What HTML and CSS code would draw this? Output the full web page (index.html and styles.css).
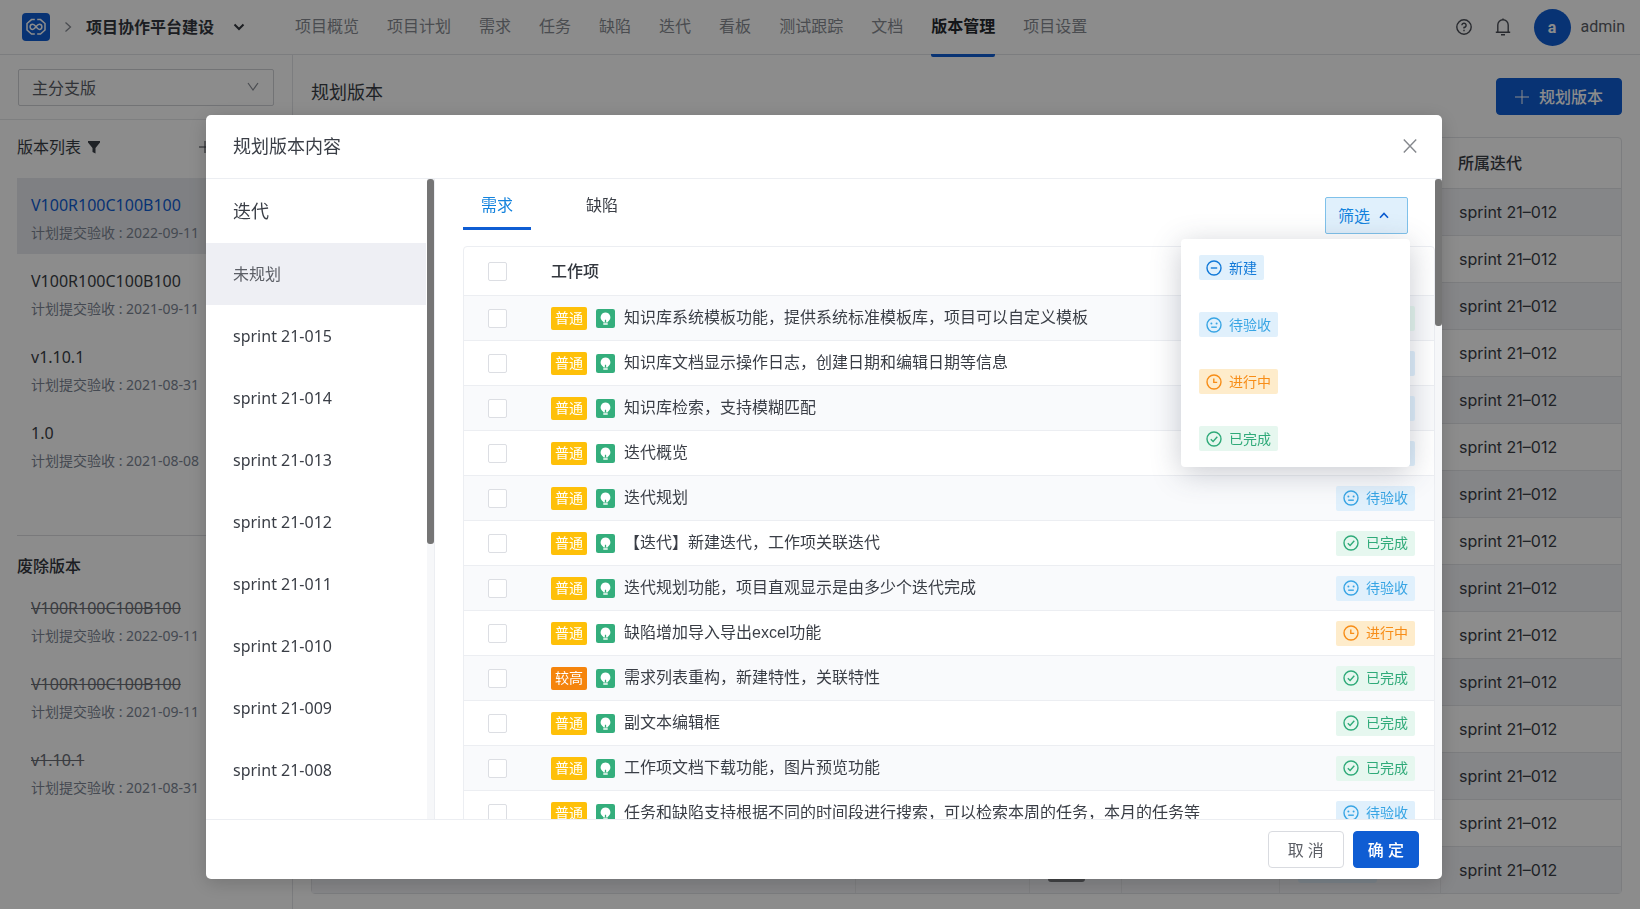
FILE: index.html
```html
<!DOCTYPE html>
<html lang="zh-CN">
<head>
<meta charset="utf-8">
<meta name="viewport" content="width=device-width, initial-scale=1">
<title>版本管理</title>
<link rel="stylesheet" href="styles.css">
</head>
<body>
<svg class="sprite" aria-hidden="true">
  <symbol id="i-bulb" viewBox="0 0 18 18">
    <rect width="18" height="18" rx="2" fill="#34ae7c"/>
    <path d="M9 3.200a4.600 4.600 0 0 0-3.200 7.900c.8.700 1.200 1.100 1.300 1.600h3.800c.1-.5.500-.9 1.300-1.600A4.600 4.600 0 0 0 9 3.200z" fill="#fff"/>
    <path d="M9 12.800v-2.600" stroke="#34ae7c" stroke-width="1.200"/>
    <path d="M6.900 14.200h4.200" stroke="#fff" stroke-width="1.400"/>
  </symbol>
  <symbol id="i-new" viewBox="0 0 16 16"><g fill="none" stroke="currentColor" stroke-width="1.4"><circle cx="8" cy="8" r="7"/><path d="M4.8 8h6.4"/></g></symbol>
  <symbol id="i-face" viewBox="0 0 16 16"><g fill="none" stroke="currentColor" stroke-width="1.4"><circle cx="8" cy="8" r="7"/><path d="M5.2 10.2h5.6"/></g><circle cx="5.4" cy="6.4" r="1" fill="currentColor"/><circle cx="10.6" cy="6.4" r="1" fill="currentColor"/></symbol>
  <symbol id="i-clock" viewBox="0 0 16 16"><g fill="none" stroke="currentColor" stroke-width="1.4"><circle cx="8" cy="8" r="7"/><path d="M7.8 4.4v4h3.4"/></g></symbol>
  <symbol id="i-done" viewBox="0 0 16 16"><g fill="none" stroke="currentColor" stroke-width="1.4"><circle cx="8" cy="8" r="7"/><path d="M4.8 8.2l2.3 2.2 4.2-4.6"/></g></symbol>
</svg>

<div class="app">
  <header class="topbar">
    <a class="logo" href="#" aria-label="首页"><svg width="28" height="28" viewBox="0 0 28 28"><rect width="28" height="28" rx="4" fill="#0f5dd3"/><g fill="none" stroke="#fff" stroke-width="1.500"><path d="M12.800 6.600H9.500L5 10.500v6.500l4.500 4h3.300M15.200 6.600h3.300l4.500 3.900v6.500l-4.500 4h-3.300"/><path d="M14 13.800c-1.500-2-2.300-2.600-3.300-2.600a2.600 2.600 0 0 0 0 5.200c1 0 1.800-.6 3.300-2.600s2.300-2.600 3.300-2.600a2.600 2.600 0 0 1 0 5.200c-1 0-1.800-.6-3.300-2.600z"/></g></svg></a>
    <svg class="crumb" width="8" height="12" viewBox="0 0 8 12"><path d="M1.500 1.500L6.500 6l-5 4.500" fill="none" stroke="#888c94" stroke-width="1.300"/></svg>
    <button class="project" type="button">项目协作平台建设 <svg width="12" height="8" viewBox="0 0 12 8"><path d="M1.500 1.500L6 6l4.500-4.500" fill="none" stroke="currentColor" stroke-width="2"/></svg></button>
    <nav class="nav">
      <a href="#">项目概览</a><a href="#">项目计划</a><a href="#">需求</a><a href="#">任务</a><a href="#">缺陷</a><a href="#">迭代</a><a href="#">看板</a><a href="#">测试跟踪</a><a href="#">文档</a><a class="active" href="#">版本管理</a><a href="#">项目设置</a>
    </nav>
    <div class="user">
      <button class="icon-btn" type="button" aria-label="帮助"><svg width="16" height="16" viewBox="0 0 16 16" fill="none" stroke="currentColor" stroke-width="1.400"><circle cx="8" cy="8" r="7.200"/><path d="M5.900 6.300A2.100 2.100 0 1 1 8 8.400v1.200"/><path d="M8 10.800v1.400"/></svg></button>
      <button class="icon-btn" type="button" aria-label="通知"><svg width="16" height="18" viewBox="0 0 16 18" fill="none" stroke="currentColor" stroke-width="1.400"><path d="M.8 14.300h14.400M2.800 14.300V7a5.200 5.200 0 0 1 10.400 0v7.300M8 .4v1.600M6 16.800h4"/></svg></button>
      <span class="avatar">a</span>
      <span class="username">admin</span>
    </div>
  </header>

  <div class="page">
    <aside class="sidebar">
      <div class="branch">
        <div class="select-box">
          <select aria-label="分支"><option>主分支版</option></select>
          <svg width="12" height="10" viewBox="0 0 12 10"><path d="M1 1l5 7 5-7" fill="none" stroke="#888c94" stroke-width="1.200"/></svg>
        </div>
      </div>
      <section class="versions">
        <h2 class="side-title">版本列表
          <svg width="12" height="13" viewBox="0 0 12 13"><path d="M0 0h12v1.500L7.500 7v5.500l-3-1.500V7L0 1.500z" fill="currentColor"/></svg>
          <button class="add" type="button" aria-label="新增版本"><svg width="12" height="12" viewBox="0 0 12 12"><path d="M6 0v12M0 6h12" stroke="currentColor" stroke-width="1"/></svg></button>
        </h2>
        <ul class="version-list">
          <li class="selected"><strong>V100R100C100B100</strong><span>计划提交验收 : 2022-09-11</span></li>
          <li><strong>V100R100C100B100</strong><span>计划提交验收 : 2021-09-11</span></li>
          <li><strong>v1.10.1</strong><span>计划提交验收 : 2021-08-31</span></li>
          <li><strong>1.0</strong><span>计划提交验收 : 2021-08-08</span></li>
        </ul>
      </section>
      <section class="obsolete">
        <h2 class="side-title">废除版本</h2>
        <ul class="version-list struck">
          <li><strong>V100R100C100B100</strong><span>计划提交验收 : 2022-09-11</span></li>
          <li><strong>V100R100C100B100</strong><span>计划提交验收 : 2021-09-11</span></li>
          <li><strong>v1.10.1</strong><span>计划提交验收 : 2021-08-31</span></li>
        </ul>
      </section>
    </aside>

    <main class="main">
      <div class="main-head">
        <h1>规划版本</h1>
        <button class="btn primary plan" type="button"><svg width="14" height="14" viewBox="0 0 14 14"><path d="M7 0v14M0 7h14" stroke="currentColor" stroke-width="1"/></svg>规划版本</button>
      </div>
      <table class="plan-table">
        <colgroup><col><col class="c2"><col class="c3"><col class="c4"><col class="c5"><col class="c6"></colgroup>
        <thead><tr><th></th><th></th><th></th><th></th><th></th><th>所属迭代</th></tr></thead>
        <tbody>
          <tr><td></td><td></td><td></td><td></td><td></td><td>sprint 21–012</td></tr>
          <tr><td></td><td></td><td></td><td></td><td></td><td>sprint 21–012</td></tr>
          <tr><td></td><td></td><td></td><td></td><td></td><td>sprint 21–012</td></tr>
          <tr><td></td><td></td><td></td><td></td><td></td><td>sprint 21–012</td></tr>
          <tr><td></td><td></td><td></td><td></td><td></td><td>sprint 21–012</td></tr>
          <tr><td></td><td></td><td></td><td></td><td></td><td>sprint 21–012</td></tr>
          <tr><td></td><td></td><td></td><td></td><td></td><td>sprint 21–012</td></tr>
          <tr><td></td><td></td><td></td><td></td><td></td><td>sprint 21–012</td></tr>
          <tr><td></td><td></td><td></td><td></td><td></td><td>sprint 21–012</td></tr>
          <tr><td></td><td></td><td></td><td></td><td></td><td>sprint 21–012</td></tr>
          <tr><td></td><td></td><td></td><td></td><td></td><td>sprint 21–012</td></tr>
          <tr><td></td><td></td><td></td><td></td><td></td><td>sprint 21–012</td></tr>
          <tr><td></td><td></td><td></td><td></td><td></td><td>sprint 21–012</td></tr>
          <tr><td></td><td></td><td></td><td></td><td></td><td>sprint 21–012</td></tr>
          <tr><td></td><td></td><td><span class="chip dark"></span></td><td></td><td><span class="chip light"></span></td><td>sprint 21–012</td></tr>
        </tbody>
      </table>
    </main>
  </div>
</div>

<div class="mask">
  <div class="modal" role="dialog" aria-modal="true" aria-labelledby="dlg-title">
    <header class="modal-head">
      <h2 id="dlg-title">规划版本内容</h2>
      <button class="close" type="button" aria-label="关闭"><svg width="14" height="14" viewBox="0 0 14 14"><path d="M.8.5l12.400 13M13.200.5L.8 13.500" stroke="currentColor" stroke-width="1.400"/></svg></button>
    </header>

    <div class="modal-body">
      <div class="sprints">
        <h3>迭代</h3>
        <ul>
          <li class="selected">未规划</li>
          <li>sprint 21-015</li>
          <li>sprint 21-014</li>
          <li>sprint 21-013</li>
          <li>sprint 21-012</li>
          <li>sprint 21-011</li>
          <li>sprint 21-010</li>
          <li>sprint 21-009</li>
          <li>sprint 21-008</li>
        </ul>
      </div>
      <div class="scrollbar left"><div class="thumb long"></div></div>

      <div class="items">
        <div class="items-head">
          <div class="tabs" role="tablist">
            <button class="tab active" type="button" role="tab" aria-selected="true">需求</button>
            <button class="tab" type="button" role="tab" aria-selected="false">缺陷</button>
          </div>
          <div class="filter">
            <button class="filter-btn" type="button" aria-expanded="true">筛选<svg width="10" height="7" viewBox="0 0 10 7"><path d="M1 5.800L5 1.500l4 4.300" fill="none" stroke="#0a5ad0" stroke-width="1.600"/></svg></button>
            <ul class="menu">
              <li><span class="status new"><svg><use href="#i-new"/></svg>新建</span></li>
              <li><span class="status wait"><svg><use href="#i-face"/></svg>待验收</span></li>
              <li><span class="status doing"><svg><use href="#i-clock"/></svg>进行中</span></li>
              <li><span class="status done"><svg><use href="#i-done"/></svg>已完成</span></li>
            </ul>
          </div>
        </div>

        <table class="work">
          <thead><tr><th class="pick"><input type="checkbox" aria-label="全选"></th><th>工作项</th><th class="state"></th></tr></thead>
          <tbody>
            <tr><td class="pick"><input type="checkbox" aria-label="选择"></td><td><div class="item"><span class="level">普通</span><svg><use href="#i-bulb"/></svg>知识库系统模板功能，提供系统标准模板库，项目可以自定义模板</div></td><td class="state"><span class="status done"><svg><use href="#i-done"/></svg>已完成</span></td></tr>
            <tr><td class="pick"><input type="checkbox" aria-label="选择"></td><td><div class="item"><span class="level">普通</span><svg><use href="#i-bulb"/></svg>知识库文档显示操作日志，创建日期和编辑日期等信息</div></td><td class="state"><span class="status wait"><svg><use href="#i-face"/></svg>待验收</span></td></tr>
            <tr><td class="pick"><input type="checkbox" aria-label="选择"></td><td><div class="item"><span class="level">普通</span><svg><use href="#i-bulb"/></svg>知识库检索，支持模糊匹配</div></td><td class="state"><span class="status wait"><svg><use href="#i-face"/></svg>待验收</span></td></tr>
            <tr><td class="pick"><input type="checkbox" aria-label="选择"></td><td><div class="item"><span class="level">普通</span><svg><use href="#i-bulb"/></svg>迭代概览</div></td><td class="state"><span class="status wait"><svg><use href="#i-face"/></svg>待验收</span></td></tr>
            <tr><td class="pick"><input type="checkbox" aria-label="选择"></td><td><div class="item"><span class="level">普通</span><svg><use href="#i-bulb"/></svg>迭代规划</div></td><td class="state"><span class="status wait"><svg><use href="#i-face"/></svg>待验收</span></td></tr>
            <tr><td class="pick"><input type="checkbox" aria-label="选择"></td><td><div class="item"><span class="level">普通</span><svg><use href="#i-bulb"/></svg>【迭代】新建迭代，工作项关联迭代</div></td><td class="state"><span class="status done"><svg><use href="#i-done"/></svg>已完成</span></td></tr>
            <tr><td class="pick"><input type="checkbox" aria-label="选择"></td><td><div class="item"><span class="level">普通</span><svg><use href="#i-bulb"/></svg>迭代规划功能，项目直观显示是由多少个迭代完成</div></td><td class="state"><span class="status wait"><svg><use href="#i-face"/></svg>待验收</span></td></tr>
            <tr><td class="pick"><input type="checkbox" aria-label="选择"></td><td><div class="item"><span class="level">普通</span><svg><use href="#i-bulb"/></svg>缺陷增加导入导出excel功能</div></td><td class="state"><span class="status doing"><svg><use href="#i-clock"/></svg>进行中</span></td></tr>
            <tr><td class="pick"><input type="checkbox" aria-label="选择"></td><td><div class="item"><span class="level high">较高</span><svg><use href="#i-bulb"/></svg>需求列表重构，新建特性，关联特性</div></td><td class="state"><span class="status done"><svg><use href="#i-done"/></svg>已完成</span></td></tr>
            <tr><td class="pick"><input type="checkbox" aria-label="选择"></td><td><div class="item"><span class="level">普通</span><svg><use href="#i-bulb"/></svg>副文本编辑框</div></td><td class="state"><span class="status done"><svg><use href="#i-done"/></svg>已完成</span></td></tr>
            <tr><td class="pick"><input type="checkbox" aria-label="选择"></td><td><div class="item"><span class="level">普通</span><svg><use href="#i-bulb"/></svg>工作项文档下载功能，图片预览功能</div></td><td class="state"><span class="status done"><svg><use href="#i-done"/></svg>已完成</span></td></tr>
            <tr><td class="pick"><input type="checkbox" aria-label="选择"></td><td><div class="item"><span class="level">普通</span><svg><use href="#i-bulb"/></svg>任务和缺陷支持根据不同的时间段进行搜索，可以检索本周的任务，本月的任务等</div></td><td class="state"><span class="status wait"><svg><use href="#i-face"/></svg>待验收</span></td></tr>
          </tbody>
        </table>
      </div>
      <div class="scrollbar"><div class="thumb short"></div></div>
    </div>

    <footer class="modal-foot">
      <button class="btn" type="button">取 消</button>
      <button class="btn primary ok" type="button">确 定</button>
    </footer>
  </div>
</div>
</body>
</html>
```
FILE: styles.css
```css
* { box-sizing: border-box; }

body {
  margin: 0;
  font: 16px/24px "Noto Sans", "Noto Sans CJK SC", sans-serif;
  color: #3a3e46;
  background: #fff;
}

h1, h2, h3, ul { margin: 0; padding: 0; font-weight: 400; }
ul { list-style: none; }
button, select, input { font: inherit; color: inherit; margin: 0; }
button { background: none; border: 0; padding: 0; cursor: pointer; }
a { color: inherit; text-decoration: none; }
svg { display: block; flex: none; }
.sprite { position: absolute; width: 0; height: 0; }

.app { display: flex; flex-direction: column; height: 100vh; overflow: hidden; }

/* Top bar */
.topbar {
  display: flex;
  align-items: center;
  flex: none;
  height: 55px;
  padding: 0 15px 0 22px;
  border-bottom: 1px solid #e2e3e7;
}
.crumb { margin: 0 14px; }
.project { display: flex; align-items: center; gap: 19px; font-weight: 700; color: #33373e; }
.nav { display: flex; gap: 28px; align-self: stretch; margin-left: 50px; color: #888b92; }
.nav a { height: 57px; line-height: 52px; white-space: nowrap; }
.nav .active { font-weight: 700; color: #25282e; border-bottom: 3px solid #0f5dd3; border-radius: 2px; }
.user { display: flex; align-items: center; margin-left: auto; font-family: Roboto, sans-serif; color: #5a5e66; }
.icon-btn { margin-right: 23px; color: #4a4e56; }
.avatar {
  width: 37px;
  height: 37px;
  margin-right: 10px;
  border-radius: 50%;
  background: #0f5dd3;
  color: #fff;
  font-weight: 700;
  line-height: 37px;
  text-align: center;
}

.page { display: flex; flex: 1; min-height: 0; }

/* Version sidebar */
.sidebar { flex: none; width: 293px; border-right: 1px solid #e2e3e7; }
.branch { padding: 14px 18px 13px; border-bottom: 1px solid #e6e7ea; }
.select-box { position: relative; }
.select-box select {
  width: 100%;
  height: 37px;
  padding: 0 13px;
  border: 1px solid #cfd1d6;
  border-radius: 2px;
  background: #fff;
  color: #5a5e66;
  appearance: none;
}
.select-box svg { position: absolute; right: 15px; top: 13px; }
.side-title { display: flex; align-items: center; gap: 7px; font-size: 16px; line-height: 24px; }
.add { margin-left: 92px; }
.versions { margin-left: 17px; padding: 15px 18px 53px 0; border-bottom: 1px solid #dcdde1; }
.versions .version-list { margin-top: 19px; }
.obsolete { padding: 18px 18px 0 17px; }
.obsolete .side-title { color: #33373e; font-weight: 500; }
.obsolete .version-list { margin-top: 3px; }
.version-list li { height: 76px; padding: 15px 14px; }
.version-list strong { display: block; font-weight: 400; }
.version-list span { display: block; margin-top: 5px; font-size: 14px; line-height: 22px; color: #7d8694; white-space: nowrap; }
.version-list .selected { background: #e8eaee; }
.version-list .selected strong { color: #0f5dd3; }
.struck strong { color: #6b6e75; text-decoration: line-through; }

/* Planned items behind the dialog */
.main { flex: 1; min-width: 0; padding: 0 18px; }
.main-head { display: flex; justify-content: space-between; align-items: flex-start; height: 82px; padding-top: 23px; }
.main-head h1 { font-size: 18px; line-height: 28px; }
.btn {
  height: 37px;
  padding: 0 19px;
  border: 1px solid #d9dbe0;
  border-radius: 4px;
  background: #fff;
  color: #5c5f66;
}
.btn.primary { border-color: #0f5dd3; background: #0f5dd3; color: #fff; font-weight: 500; }
.btn.plan { display: flex; align-items: center; gap: 10px; padding: 0 18px; }
.plan-table {
  width: 100%;
  table-layout: fixed;
  border: 1px solid #e2e3e7;
  border-radius: 4px;
  border-spacing: 0;
  font-family: Inter, "Noto Sans CJK SC", sans-serif;
}
.plan-table .c2 { width: 174px; }
.plan-table .c3 { width: 92px; }
.plan-table .c4 { width: 158px; }
.plan-table .c5 { width: 161px; }
.plan-table .c6 { width: 181px; }
.plan-table th { height: 50px; padding: 0 18px; text-align: left; font-weight: 500; }
.plan-table td { height: 47px; padding: 0 18px; border-top: 1px solid #e2e3e7; }
.plan-table td + td { border-left: 1px solid #e6e7ea; }
.plan-table tbody tr:nth-child(odd) { background: #f3f4f8; }
.chip { display: block; height: 25px; border-radius: 3px; }
.chip.dark { width: 37px; height: 23px; background: #77797d; }
.chip.light { width: 79px; background: #dfeffb; }

/* Dialog */
.mask {
  position: fixed;
  inset: 0;
  display: flex;
  padding: 115px 198px 30px 206px;
  background: rgba(0, 0, 0, .45);
}
.modal {
  display: flex;
  flex: 1;
  flex-direction: column;
  min-width: 0;
  border-radius: 5px;
  background: #fff;
  box-shadow: 0 4px 20px rgba(0, 0, 0, .18);
}
.modal-head {
  display: flex;
  align-items: center;
  justify-content: space-between;
  flex: none;
  height: 64px;
  padding: 0 25px 2px 27px;
  border-bottom: 1px solid #eceef2;
}
.modal-head h2 { font-size: 18px; line-height: 28px; }
.close { color: #85888d; }
.modal-body { display: flex; flex: 1; min-height: 0; }
.modal-foot {
  display: flex;
  align-items: center;
  justify-content: flex-end;
  gap: 9px;
  flex: none;
  height: 60px;
  padding: 0 23px;
  border-top: 1px solid #eceef2;
}
.modal-foot .ok { padding: 0 14px; }

.sprints { flex: none; width: 221px; padding-right: 1px; overflow: hidden; }
.sprints h3 { padding-left: 27px; font-size: 18px; line-height: 64px; }
.sprints li { padding-left: 27px; line-height: 62px; }
.sprints .selected { background: #eeeff4; color: #5c5f66; }

.scrollbar { flex: none; width: 7px; background: #f6f7f9; }
.scrollbar.left { width: 8px; border-right: 1px solid #eceef2; }
.thumb { width: 7px; border-radius: 3px; background: #757575; }
.thumb.long { height: 57%; }
.thumb.short { height: 23%; }

.items { flex: 1; min-width: 0; padding-left: 28px; overflow: hidden; }
.items-head { display: flex; justify-content: space-between; align-items: flex-start; height: 67px; padding-right: 27px; }
.tabs { display: flex; gap: 37px; }
.tab { height: 51px; padding: 3px 18px 0; line-height: 24px; border-bottom: 3px solid transparent; }
.tab.active { color: #1483dd; border-color: #0f5dd3; }
.filter { position: relative; padding-top: 18px; }
.filter-btn {
  display: flex;
  align-items: center;
  gap: 9px;
  height: 37px;
  padding: 0 18px 0 12px;
  border: 1px solid #7fc1ea;
  border-radius: 2px;
  background: #e0f0fc;
  color: #1483dd;
}
.menu {
  position: absolute;
  top: 60px;
  right: -2px;
  width: 229px;
  border-radius: 4px;
  background: #fff;
  box-shadow: 0 6px 30px rgba(60, 70, 90, .28);
}
.menu li { display: flex; align-items: center; height: 57px; padding-left: 18px; }

.status {
  display: inline-flex;
  align-items: center;
  gap: 7px;
  height: 25px;
  padding: 0 7px;
  border-radius: 2px;
  font-size: 14px;
  white-space: nowrap;
  vertical-align: top;
}
.status svg { width: 16px; height: 16px; }
.status.new { background: #e0f0fc; color: #1179d8; }
.status.wait { background: #e0f0fc; color: #38a5e4; }
.status.doing { background: #feeccb; color: #f78d17; }
.status.done { background: #e6f7ef; color: #2faa79; }

.work {
  width: 100%;
  border: 1px solid #eceef2;
  border-radius: 4px 4px 0 0;
  border-spacing: 0;
}
.work th, .work td { height: 45px; padding: 0; border-bottom: 1px solid #eceef2; text-align: left; }
.work th { height: 49px; font-weight: 500; color: #33373e; }
.work tbody tr:nth-child(odd) { background: #f9fafc; }
.work .pick { width: 87px; padding-left: 24px; }
.work .state { width: 120px; padding-right: 19px; text-align: right; }
.work input {
  display: block;
  width: 19px;
  height: 19px;
  border: 1px solid #dcdee3;
  border-radius: 2px;
  background: #fff;
  appearance: none;
}
.item { display: flex; align-items: center; white-space: nowrap; font-family: "Liberation Sans", "Noto Sans CJK SC", sans-serif; }
.item svg { width: 19px; height: 19px; margin: 0 9px; }
.level {
  width: 36px;
  border-radius: 2px;
  background: #fec009;
  color: #fff;
  font-size: 14px;
  line-height: 23px;
  text-align: center;
}
.level.high { background: #f5840c; }
```
